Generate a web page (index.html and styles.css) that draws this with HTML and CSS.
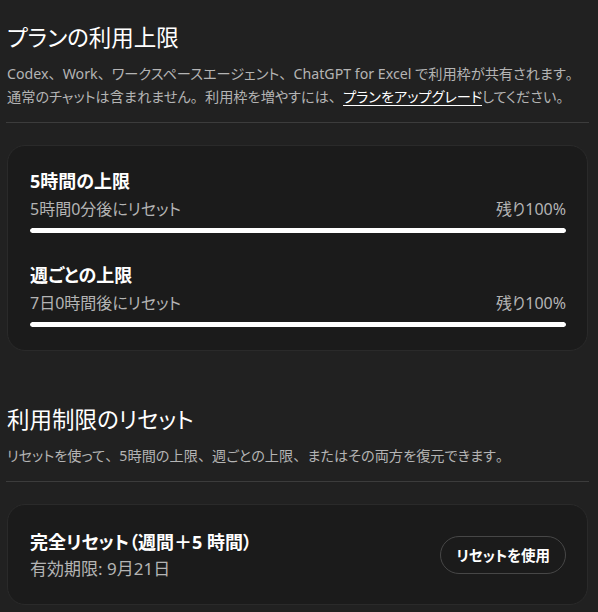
FILE: index.html
```html
<!DOCTYPE html>
<html lang="ja">
<head>
<meta charset="utf-8">
<link rel="stylesheet" href="styles.css">
</head>
<body>
<main class="page">
  <section class="section">
    <h1 class="section-title">プランの利用上限</h1>
    <p class="section-desc">Codex<span class="fw">、</span>Work<span class="fw">、</span>ワークスペースエージェント<span class="fw">、</span>ChatGPT for Excel で利用枠が共有されます<span class="fw">。</span><br>通常のチャットは含まれません<span class="fw">。</span>利用枠を増やすには<span class="fw">、</span><a class="link" href="#">プランをアップグレード</a>してください<span class="fw">。</span></p>
    <hr class="divider">
    <div class="card card-limits">
      <div class="limit">
        <div class="limit-title">5時間の上限</div>
        <div class="limit-row"><span>5時間0分後にリセット</span><span>残り100%</span></div>
        <div class="bar"><div class="bar-fill" style="width:100%"></div></div>
      </div>
      <div class="limit">
        <div class="limit-title">週ごとの上限</div>
        <div class="limit-row"><span>7日0時間後にリセット</span><span>残り100%</span></div>
        <div class="bar"><div class="bar-fill" style="width:100%"></div></div>
      </div>
    </div>
  </section>
  <section class="section section-second">
    <h1 class="section-title">利用制限のリセット</h1>
    <p class="section-desc">リセットを使って<span class="fw">、</span>5時間の上限<span class="fw">、</span>週ごとの上限<span class="fw">、</span>またはその両方を復元できます<span class="fw">。</span></p>
    <hr class="divider">
    <div class="card card-reset">
      <div class="reset-info">
        <div class="reset-title">完全リセット（週間＋5 時間）</div>
        <div class="reset-sub">有効期限: 9月21日</div>
      </div>
      <button class="btn" type="button">リセットを使用</button>
    </div>
  </section>
</main>
</body>
</html>
```

FILE: styles.css
```css
* { box-sizing: border-box; }
html, body { margin: 0; padding: 0; }
body {
  background: #212121;
  color: #ffffff;
  font-family: "Noto Sans", "Noto Sans CJK JP", sans-serif;
  font-feature-settings: "palt";
  width: 598px;
  height: 612px;
  overflow: hidden;
}
.fw { font-feature-settings: normal; }
.page {
  padding: 23px 9px 0 6px;
}
.section-title {
  margin: 0;
  font-size: 22.5px;
  font-weight: 400;
  line-height: 30px;
  padding-left: 1px;
}
.section-desc {
  margin: 9px 0 0;
  font-size: 14.2px;
  line-height: 23px;
  color: #b4b4b4;
  padding-left: 1px;
  white-space: nowrap;
}
.link {
  color: #ffffff;
  text-decoration: underline;
  text-underline-offset: 3px;
}
.divider {
  margin: 14px 0 0;
  border: 0;
  height: 1px;
  background: #3c3c3c;
}
.card {
  margin: 22px 1px 0 1px;
  background: #1b1b1b;
  border: 1px solid #2a2a2a;
  border-radius: 18px;
}
.card-limits {
  padding: 22px 21px 23px 22px;
}
.limit + .limit { margin-top: 29px; }
.limit-title {
  font-size: 18px;
  font-weight: 700;
  line-height: 26px;
}
.limit-row {
  margin-top: 4px;
  display: flex;
  justify-content: space-between;
  font-size: 16px;
  line-height: 22px;
  color: #b4b4b4;
}
.bar {
  margin-top: 8px;
  height: 5px;
  border-radius: 3px;
  background: #3a3a3a;
  overflow: hidden;
}
.bar-fill {
  height: 100%;
  background: #ffffff;
  border-radius: 3px;
}
.section-second {
  margin-top: 54px;
}
.card-reset {
  display: flex;
  align-items: center;
  justify-content: space-between;
  padding: 24px 21px 24px 22px;
}
.reset-info {
  display: flex;
  flex-direction: column;
  gap: 3px;
}
.reset-title {
  font-size: 18px;
  font-weight: 700;
  line-height: 26px;
}
.reset-sub {
  font-size: 17px;
  line-height: 22px;
  color: #b4b4b4;
}
.btn {
  font-family: inherit;
  font-feature-settings: "palt";
  font-size: 14.5px;
  font-weight: 700;
  color: #ffffff;
  background: transparent;
  border: 1px solid #474747;
  border-radius: 999px;
  height: 38px;
  padding: 0 15px;
  line-height: 20px;
}
```
